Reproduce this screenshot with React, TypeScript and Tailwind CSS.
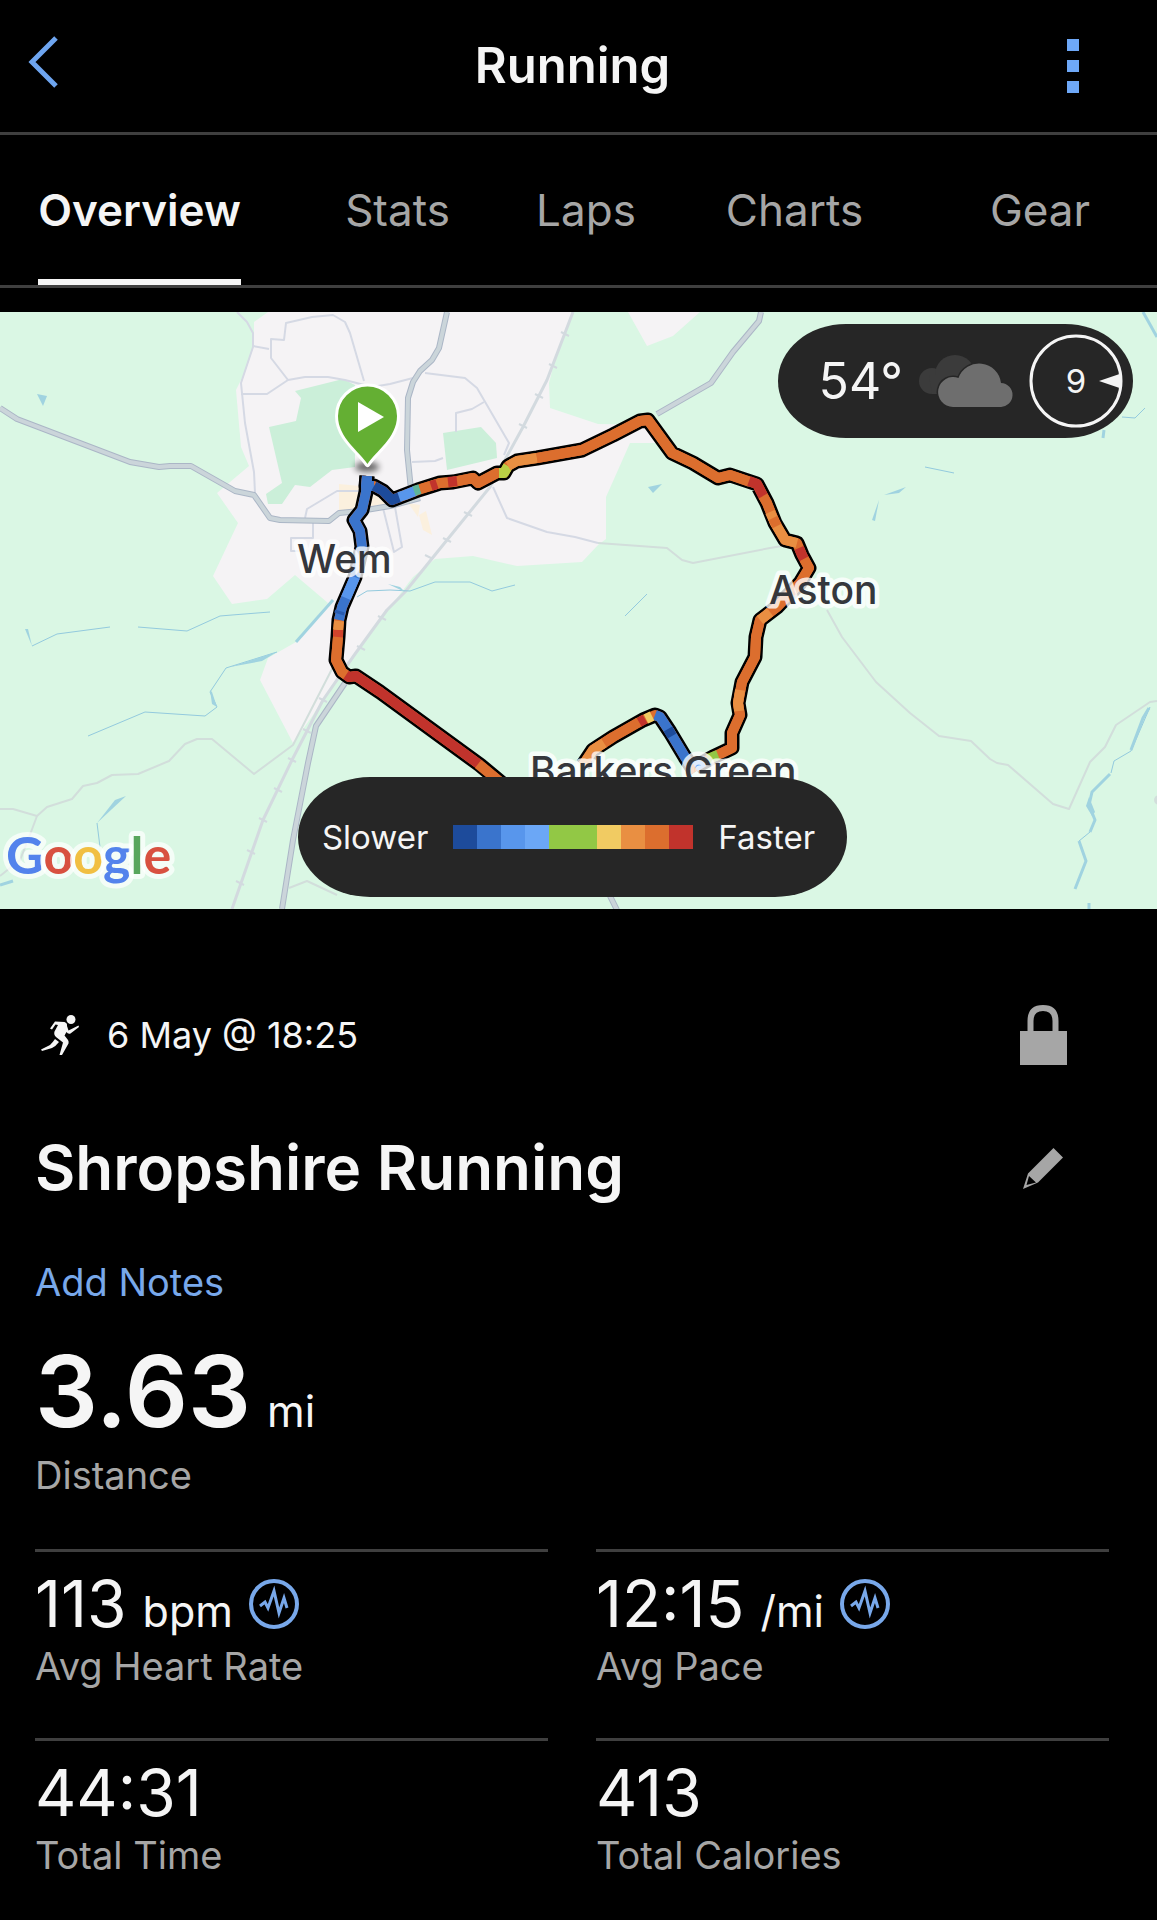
import { useState } from 'react'

interface Metric {
  value: string
  unit?: string
  label: string
  hasChart?: boolean
}

interface Segment {
  color: string
  points: string
}

const TABS = ['Overview', 'Stats', 'Laps', 'Charts', 'Gear']

const METRICS: Metric[] = [
  { value: '113', unit: 'bpm', label: 'Avg Heart Rate', hasChart: true },
  { value: '12:15', unit: '/mi', label: 'Avg Pace', hasChart: true },
  { value: '44:31', label: 'Total Time' },
  { value: '413', label: 'Total Calories' }
]

const PACE_COLORS = [
  'bg-[#1d4b9b]',
  'bg-[#3a74cc]',
  'bg-[#5896ec]',
  'bg-[#6ba7f6]',
  'bg-[#92c845]',
  'bg-[#92c845]',
  'bg-[#f1cb62]',
  'bg-[#e98f42]',
  'bg-[#dc6e2e]',
  'bg-[#c1332c]'
]

const MAJOR_ROADS = [
  '0,408 17,419 130,462 159,467 170,466 191,466 235,491 254,495 270,518 280,520 329,521 339,513 360,511 390,506 420,498',
  '447,312 439,348 432,360 420,371 413,382 408,398 407,450 411,490',
  '761,312 759,321 733,352 711,383 657,414',
  '345,683 316,726 308,763 293,840 282,909',
  '610,896 617,910'
]

const TOWN_STREETS = [
  '237,312 247,322 253,333 253,347 241,383 245,423 254,472 255,493',
  '253,346 269,349',
  '364,381 350,333 345,322 333,315 312,317 286,323 284,340 271,339 271,358 288,380',
  '241,394 267,394 288,380 305,377 328,377 345,380 372,387 390,384 413,378',
  '425,373 465,378 477,388 509,443 504,455',
  '484,402 472,409 456,413 456,432',
  '412,462 435,461 443,458',
  '370,491 337,491 307,509 305,518',
  '313,523 313,538 291,538 291,551 300,551',
  '383,508 394,552 402,547 395,507',
  '493,487 507,518 547,532 575,537 598,543'
]

const LANES = [
  '598,543 667,548 682,560 693,563 770,548 782,546',
  '333,667 293,745 254,774 212,739 197,739 185,744 169,761 138,774 112,775 97,783 83,786 72,799 47,807 37,816 13,809 0,809',
  '37,816 28,840 20,860 0,876',
  '827,610 842,637 876,682 910,713 939,736 971,741 990,759 997,763 1008,765 1053,804 1069,809 1090,762 1105,747 1116,725 1150,702 1157,701',
  '289,888 307,881 337,895'
]

const RAILWAY = '573,312 547,380 523,427 490,487 447,540 405,592 387,610 355,654 323,700 292,760 263,820 232,909'

const RAILWAY_TICKS = [
  [565, 334], [553, 366], [539, 396], [523, 426], [468, 514], [447, 540], [429, 557],
  [382, 618], [361, 648], [323, 700], [307, 731], [292, 760], [278, 790], [263, 820], [251, 852], [240, 883]
]

const STREAMS = [
  '32,646 57,634 110,627',
  '138,627 187,631 220,616 232,615 270,612',
  '88,736 145,712 205,716 217,707 210,692 226,668 277,652',
  '357,597 367,591 390,590 410,591 435,582 470,582 492,591 515,585',
  '647,594 625,616',
  '97,823 100,847',
  '925,467 954,473',
  '1122,417 1135,418 1145,408',
  '1150,707 1131,751 1114,761 1111,773',
  '1090,832 1079,841 1086,861'
]

const WIDE_STREAMS = [
  '296,642 333,600',
  '1143,312 1157,337',
  '1104,430 1103,438',
  '1149,708 1143,718 1131,750',
  '1110,774 1092,792 1089,805 1095,820 1090,832',
  '1079,841 1086,861 1075,889',
  '1089,903 1089,910',
  '0,885 13,881'
]

const PONDS = [
  '37,394 47,396 43,406',
  '25,629 28,629 32,646',
  '210,690 212,692 217,707 212,704',
  '230,667 277,652 262,661',
  '388,584 400,587 405,592',
  '126,796 115,800 97,823',
  '648,487 662,484 653,493',
  '884,495 906,487 899,493',
  '879,500 872,520 875,521',
  '1089,797 1086,806 1092,816 1095,812'
]

const OUTBOUND = '367,476 366,486 374,486 383,491 392,500 405,495 418,490 440,483 453,482 473,478 478,483 497,473 504,473 508,466 517,461 537,458 582,450 613,435 640,421 648,420 672,453 693,463 718,478 730,475 757,484 767,503 775,523 785,540 797,543 802,555 809,568 800,583 777,607 760,620 756,637 755,657 742,682 738,703 740,715 732,733 732,748 713,757 695,767'
const SPUR = '695,772 685,757 670,732 660,717 655,715 643,720 613,737 593,750 583,765'
const HOMEBOUND = '367,476 366,492 362,510 354,520 360,531 362,547 355,577 342,607 339,620 338,637 336,660 342,672 349,677 356,676 380,692 480,765 510,790'

const ROUTE_LINES = [OUTBOUND, SPUR, HOMEBOUND]

const ROUTE_SEGMENTS: Segment[] = [
  { color: '#3a74cc', points: '367,476 366,492 362,510 354,520 360,531 362,547 355,577 342,607 339,620' },
  { color: '#5896ec', points: '355,577 346,598' },
  { color: '#2a5cb0', points: '340,611 339,614' },
  { color: '#e98f42', points: '339,621 338,630' },
  { color: '#d0432c', points: '338,630 338,638' },
  { color: '#dc6e2e', points: '338,637 336,660 342,672 346,675' },
  { color: '#c1332c', points: '346,675 349,677 356,676 380,692 480,765' },
  { color: '#dc6e2e', points: '478,764 510,790' },
  { color: '#1d4b9b', points: '374,486 383,491 392,500 400,497' },
  { color: '#5896ec', points: '399,497 405,495 415,491' },
  { color: '#5fb59a', points: '414,491 420,489' },
  { color: '#dc6e2e', points: '420,489 440,483 453,482 473,478 478,483 497,473 502,473' },
  { color: '#c1332c', points: '431,486 437,484' },
  { color: '#c1332c', points: '448,482 457,481' },
  { color: '#b9cf45', points: '499,473 504,473 508,466' },
  { color: '#e98f42', points: '508,466 517,461 537,458' },
  { color: '#dc6e2e', points: '537,458 582,450 613,435 640,421 648,420 672,453 693,463 718,478 730,475 750,482' },
  { color: '#c1332c', points: '749,481 757,484 764,498' },
  { color: '#dc6e2e', points: '763,496 767,503 775,523' },
  { color: '#e98f42', points: '770,512 775,523 785,540 797,543' },
  { color: '#dc6e2e', points: '773,518 777,526' },
  { color: '#c1332c', points: '799,548 802,555 804,559' },
  { color: '#dc6e2e', points: '804,559 809,568 800,583 777,607 760,620 756,637 755,657 742,682 738,703 740,715 732,733 732,748 720,754' },
  { color: '#e98f42', points: '770,612 760,620' },
  { color: '#e98f42', points: '740,690 738,703 739,711' },
  { color: '#92c845', points: '718,755 708,759' },
  { color: '#6ba7f6', points: '706,760 695,767' },
  { color: '#3a74cc', points: '690,765 685,757 670,732 660,717 655,715' },
  { color: '#1d4b9b', points: '672,736 668,729' },
  { color: '#f1cb62', points: '652,716 646,719' },
  { color: '#c1332c', points: '645,719 638,723' },
  { color: '#dc6e2e', points: '639,722 613,737 593,750' },
  { color: '#e98f42', points: '604,743 593,750 583,765' }
]

const PulseIcon = () => (
  <svg viewBox="0 0 50 50" className="h-[50px] w-[50px]" fill="none" stroke="#78a8ea" aria-hidden="true">
    <circle cx="25" cy="25" r="23" strokeWidth="4" />
    <polyline points="11,27 16,23 19,29 25,12 30,34 35,19 38,29" strokeWidth="3" />
  </svg>
)

const RunnerIcon = () => (
  <svg viewBox="0 0 38 40" className="h-10 w-[38px]" fill="#f5f5f5" aria-hidden="true">
    <circle cx="30" cy="4.5" r="4.5" />
    <path d="M14 6.500L23.500 7Q26.500 8 26 11L27.500 15.500L37.500 10.500L38 12L29.500 18.500Q27 19.500 25.500 17L23.500 20.500L27 25Q28 26.500 27.500 28.500L21 40H18.500L22 27.500L15 22Q12.500 19.500 13.500 16.500L17 10L14.500 9.500L11 14.500L9 13.500Z" />
    <path d="M14 24L18 27Q15 31 11 33L1 36L0 34.500L9 30Q12 27 14 24Z" />
  </svg>
)

const LockIcon = () => (
  <svg viewBox="0 0 47 60" className="h-[60px] w-[47px]" aria-hidden="true">
    <path d="M10.500 28V16Q10.500 3 23 3T35.500 16V28" fill="none" stroke="#a6a6a6" strokeWidth="6" />
    <path d="M0 26H47V60H0Z" fill="#a6a6a6" />
  </svg>
)

const PencilIcon = () => (
  <svg viewBox="0 0 40 41" className="h-[41px] w-10" fill="#a6a6a6" aria-hidden="true">
    <path
      fillRule="evenodd"
      d="M30.500 0L40 9.500L15 34.500L0 41L5 25.500ZM6 28L3.500 37L13 34.500Z"
    />
  </svg>
)

const CloudIcon = () => (
  <svg viewBox="0 0 94 52" className="h-[52px] w-[94px]" aria-hidden="true">
    <g fill="#3b3b3b">
      <circle cx="13" cy="26" r="13" />
      <circle cx="36" cy="20" r="20" />
      <path d="M10 20H40V39H13Z" />
    </g>
    <g fill="#6e6e6e" stroke="#262626" strokeWidth="3" paintOrder="stroke">
      <path d="M34 52A15 15 0 1 1 39.500 23A22 22 0 0 1 82 28A12 12 0 0 1 81 52Z" />
    </g>
  </svg>
)

const WindDial = () => (
  <div className="relative flex h-[94px] w-[94px] items-center justify-center">
    <svg viewBox="0 0 94 94" className="absolute inset-0" aria-hidden="true">
      <circle cx="47" cy="47" r="45" fill="none" stroke="#f5f5f5" strokeWidth="3" />
      <path d="M70 47L92 39.500V54.500Z" fill="#f5f5f5" />
    </svg>
    <span className="text-[33px] leading-none">9</span>
  </div>
)

const RouteMap = () => (
  <svg
    viewBox="0 312 1157 597"
    className="block h-auto w-full"
    role="img"
    aria-label="Map of the running route"
    strokeLinejoin="round"
  >
    <defs>
      <filter id="pin-shadow" x="-50%" y="-100%" width="200%" height="300%">
        <feGaussianBlur stdDeviation="3" />
      </filter>
    </defs>
    <rect y="312" width="1157" height="597" fill="#daf7e4" />

    {/* Built-up areas, parks and the high street */}
    <g fill="#f5f3f5">
      <polygon points="268,312 254,322 254,345 245,372 236,390 241,447 249,466 217,493 238,523 213,576 232,604 267,599 295,575 328,603 296,642 268,658 260,680 293,743 313,715 347,663 390,607 413,577 435,559 473,556 517,566 582,562 598,545 606,539 606,497 630,443 655,443 660,425 598,424 550,408 549,383 553,367 573,312" />
      <polygon points="628,312 647,346 673,336 700,312" />
    </g>
    <g fill="#cbefd9">
      <polygon points="295,391 343,379 355,385 355,467 332,470 310,487 295,485 282,504 268,504 266,494 282,483 269,427 296,421 301,398" />
      <polygon points="443,433 481,427 496,443 497,458 447,470" />
    </g>
    <g fill="#fbf0de">
      <polygon points="339,484 390,489 390,506 339,514" />
      <polygon points="408,503 420,505 418,517" />
      <polygon points="419,515 426,511 432,535 423,530" />
    </g>

    <g fill="none" stroke="#d5d9e4" strokeWidth="2">
      {TOWN_STREETS.map((points) => (
        <polyline key={points} points={points} />
      ))}
    </g>
    <g fill="none" stroke="#d2dedb" strokeWidth="2">
      {LANES.map((points) => (
        <polyline key={points} points={points} />
      ))}
    </g>
    <circle cx="1159" cy="800" r="5" fill="#d2dedb" />

    <g fill="none" stroke="#d3dadf">
      <polyline points={RAILWAY} strokeWidth="3" />
      {RAILWAY_TICKS.map(([x, y]) => (
        <path key={`${x}-${y}`} d={`M${x - 4} ${y - 2}l8 4`} strokeWidth="2" />
      ))}
    </g>

    <g fill="none" stroke="#93cade" strokeWidth="1">
      {STREAMS.map((points) => (
        <polyline key={points} points={points} />
      ))}
    </g>
    <g fill="none" stroke="#a0d3e0" strokeWidth="3">
      {WIDE_STREAMS.map((points) => (
        <polyline key={points} points={points} />
      ))}
    </g>
    <g fill="#a0d3e0">
      {PONDS.map((points) => (
        <polygon key={points} points={points} />
      ))}
    </g>

    <g fill="none">
      {MAJOR_ROADS.map((points) => (
        <polyline key={points} points={points} stroke="#abb6c6" strokeWidth="6" />
      ))}
      {MAJOR_ROADS.map((points) => (
        <polyline key={points} points={points} stroke="#cbd5da" strokeWidth="4" />
      ))}
    </g>

    {/* Route: black casing first, pace colours over it */}
    <g fill="none" stroke="#000" strokeWidth="15">
      {ROUTE_LINES.map((points) => (
        <polyline key={points} points={points} />
      ))}
    </g>
    <g fill="none" strokeWidth="10">
      {ROUTE_LINES.map((points) => (
        <polyline key={points} points={points} stroke="#dc6e2e" />
      ))}
      <polyline points="367,476 366,486 374,486" stroke="#3a74cc" />
      {ROUTE_SEGMENTS.map((segment) => (
        <polyline key={segment.points} points={segment.points} stroke={segment.color} />
      ))}
    </g>

    <ellipse cx="367" cy="467" rx="12" ry="5" fill="#000" opacity="0.6" filter="url(#pin-shadow)" />
    <path
      d="M367.500 464C360 452 338 438 338 416A29.500 29.500 0 0 1 397 416C397 438 375 452 367.500 464Z"
      fill="#64af33"
      stroke="#fff"
      strokeWidth="6"
      paintOrder="stroke"
    />
    <path d="M358 402V432L384 417Z" fill="#fff" />

    <g
      className="font-['Inter',sans-serif] text-[39px] font-medium"
      fill="#35373c"
      stroke="#fff"
      strokeOpacity="0.8"
      strokeWidth="9"
      paintOrder="stroke"
    >
      <text x="297" y="573">Wem</text>
      <text x="769" y="604">Aston</text>
      <text x="530" y="785">Barkers Green</text>
    </g>

    <text
      x="6"
      y="874"
      className="font-['Lato',sans-serif] text-[52px] font-bold"
      stroke="#fff"
      strokeOpacity="0.7"
      strokeWidth="10"
      paintOrder="stroke"
    >
      <tspan fill="#5383ec">G</tspan>
      <tspan fill="#d85140">o</tspan>
      <tspan fill="#f1bf42">o</tspan>
      <tspan fill="#5383ec">g</tspan>
      <tspan fill="#58a65c">l</tspan>
      <tspan fill="#d85140">e</tspan>
    </text>
  </svg>
)

const MetricCell = ({ metric }: { metric: Metric }) => (
  <div className="flex h-[189px] flex-col border-t-[3px] border-[#3f3f3f] pt-5">
    <dd className="order-1 flex h-16 items-baseline gap-4">
      <span className="text-[64px] leading-[64px]">{metric.value}</span>
      {metric.unit && <span className="text-[43px] leading-none">{metric.unit}</span>}
      {metric.hasChart && (
        <button type="button" aria-label={`${metric.label} chart`} className="self-center">
          <PulseIcon />
        </button>
      )}
    </dd>
    <dt className="order-2 mt-2 text-[38px] leading-[44px] text-[#a6a6a6]">{metric.label}</dt>
  </div>
)

const App = () => {
  const [activeTab, setActiveTab] = useState('Overview')

  return (
    <div className="min-h-screen bg-black font-['Inter',sans-serif] text-[#f5f5f5]">
      <header className="grid h-[135px] grid-cols-[1fr_auto_1fr] items-center border-b-[3px] border-[#3f3f3f] pr-3">
        <button type="button" aria-label="Back" className="justify-self-start pb-2 pl-7">
          <svg viewBox="0 0 30 52" className="h-[52px] w-[30px]" fill="none" stroke="#6ea5f0" strokeWidth="5">
            <path d="M28 2L4 26L28 50" />
          </svg>
        </button>
        <h1 className="text-[49px] leading-[60px] font-semibold">Running</h1>
        <button type="button" aria-label="More options" className="flex flex-col gap-[9px] justify-self-end px-[66px]">
          <span className="h-3 w-3 bg-[#6ea8f7]" />
          <span className="h-3 w-3 bg-[#6ea8f7]" />
          <span className="h-3 w-3 bg-[#6ea8f7]" />
        </button>
      </header>

      <nav className="grid grid-cols-[279fr_237fr_140fr_277fr_214fr] justify-items-center border-b-[3px] border-[#3f3f3f] pr-[10px]">
        {TABS.map((tab) => (
          <button
            key={tab}
            type="button"
            onClick={() => setActiveTab(tab)}
            className={`h-[150px] border-b-[6px] pt-[6px] text-[44px] leading-[52px] ${
              tab === activeTab ? 'border-[#f5f5f5] font-semibold' : 'border-transparent text-[#a6a6a6]'
            }`}
          >
            {tab}
          </button>
        ))}
      </nav>

      <section className="relative mt-6 overflow-hidden">
        <RouteMap />

        <div className="absolute top-3 right-6 flex h-[114px] items-center gap-4 rounded-[68px/57px] bg-[#262626] pr-[10px] pl-[41px]">
          <span className="text-[50px] leading-none">54°</span>
          <CloudIcon />
          <WindDial />
        </div>

        <div className="absolute inset-x-0 bottom-3 flex justify-center pr-3">
          <div className="flex h-[120px] items-center gap-[25px] rounded-[72px/60px] bg-[#262626] pr-8 pl-6 text-[33px] leading-none">
            <span>Slower</span>
            <div className="flex">
              {PACE_COLORS.map((color, index) => (
                <span key={index} className={`h-6 w-6 ${color}`} />
              ))}
            </div>
            <span>Faster</span>
          </div>
        </div>
      </section>

      <main className="pr-12 pl-[35px]">
        <div className="flex items-center justify-between pt-24 pr-[42px]">
          <div className="flex items-center gap-7 pl-[6px]">
            <RunnerIcon />
            <time className="text-[36px] leading-[44px]">6 May @ 18:25</time>
          </div>
          <LockIcon />
        </div>

        <div className="mt-16 flex items-center justify-between pr-[46px]">
          <h2 className="text-[62px] leading-[78px] font-semibold">Shropshire Running</h2>
          <button type="button" aria-label="Edit title">
            <PencilIcon />
          </button>
        </div>

        <a href="#notes" className="mt-[53px] block w-fit text-[38px] leading-[44px] text-[#78a8ea]">
          Add Notes
        </a>

        <dl>
          <div className="mt-[37px] flex flex-col">
            <dd className="order-1 flex items-baseline gap-4">
              <span className="text-[99px] leading-[100px] font-semibold">3.63</span>
              <span className="text-[43px] leading-none">mi</span>
            </dd>
            <dt className="order-2 mt-3 text-[38px] leading-[44px] text-[#a6a6a6]">Distance</dt>
          </div>

          <div className="mt-[52px] grid grid-cols-2 gap-x-12">
            {METRICS.map((metric) => (
              <MetricCell key={metric.label} metric={metric} />
            ))}
          </div>
        </dl>
      </main>
    </div>
  )
}

export default App
